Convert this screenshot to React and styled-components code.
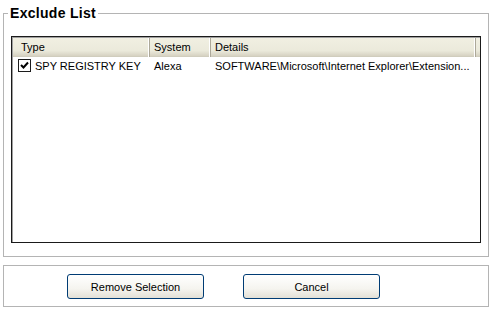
import styled, { createGlobalStyle } from 'styled-components';

const GlobalStyle = createGlobalStyle`
  body {
    margin: 0;
    background: #ffffff;
    font-family: Tahoma, "Liberation Sans", Arial, sans-serif;
    font-size: 11px;
    color: #000000;
  }
`;

const Page = styled.div`
  width: 486px;
  padding: 5px 0 0 3px;
`;

const Group = styled.fieldset`
  margin: 0;
  padding: 15px 7px 13px 7px;
  border: 1px solid #b4b4b4;
  border-radius: 0;
  min-width: 0;
  legend {
    margin-left: -3px;
    padding: 0 2px;
    font-size: 14px;
    font-weight: bold;
    line-height: 16px;
    letter-spacing: 0.3px;
    color: #000;
  }
`;

const List = styled.div`
  height: 205px;
  border: 1px solid #1a1a1a;
  box-shadow: inset 1px 1px 0 #a0a0a0;
  background: #ffffff;
  overflow: hidden;
`;

const cols = '137px 61px 265px 1fr';

const Header = styled.div`
  display: grid;
  grid-template-columns: ${cols};
  height: 18px;
  margin: 1px 0 0 1px;
  background: linear-gradient(#f1efe2, #ebeadb 70%, #d6d2c2);
  border-bottom: 1px solid #d0cdbd;
`;

const HeadCell = styled.div`
  padding-left: ${(p) => p.$pad || 4}px;
  line-height: 19px;
  border-right: 1px solid #aca899;
  box-shadow: inset -1px 0 0 #ffffff;
  white-space: nowrap;
  &:last-child {
    border-right: 0;
    box-shadow: none;
  }
`;

const Row = styled.div`
  display: grid;
  grid-template-columns: ${cols};
  height: 17px;
  margin-left: 1px;
  align-items: center;
`;

const Cell = styled.div`
  display: flex;
  align-items: center;
  gap: 4px;
  padding-left: ${(p) => p.$pad || 4}px;
  white-space: nowrap;
  overflow: hidden;
`;

const Check = styled.span`
  display: inline-flex;
  width: 11px;
  height: 11px;
  border: 1px solid #1c1c1c;
  background: #fff;
  align-items: center;
  justify-content: center;
`;

const ButtonBar = styled.div`
  display: flex;
  gap: 39px;
  margin-top: 8px;
  height: 42px;
  padding: 8px 0 0 63px;
  box-sizing: border-box;
  border: 1px solid #b4b4b4;
`;

const Button = styled.button`
  width: 137px;
  height: 25px;
  border: 1px solid #003c74;
  border-radius: 3px;
  background: linear-gradient(#ffffff, #f5f4ef 60%, #e3e0d6);
  font-family: Tahoma, "Liberation Sans", Arial, sans-serif;
  font-size: 11px;
  color: #000;
  padding: 0;
`;

const App = () => {
  return (
    <Page>
      <GlobalStyle />
      <Group>
        <legend>Exclude List</legend>
        <List>
          <Header>
            <HeadCell $pad={8}>Type</HeadCell>
            <HeadCell>System</HeadCell>
            <HeadCell>Details</HeadCell>
            <HeadCell />
          </Header>
          <Row>
            <Cell $pad={5}>
              <Check>
                <svg width="9" height="9" viewBox="0 0 9 9">
                  <path d="M1 4 L3.5 6.5 L8 1.5" fill="none" stroke="#000" strokeWidth="2" />
                </svg>
              </Check>
              SPY REGISTRY KEY
            </Cell>
            <Cell>Alexa</Cell>
            <Cell>SOFTWARE\Microsoft\Internet Explorer\Extension...</Cell>
            <Cell />
          </Row>
        </List>
      </Group>
      <ButtonBar>
        <Button>Remove Selection</Button>
        <Button>Cancel</Button>
      </ButtonBar>
    </Page>
  );
};

export default App;
